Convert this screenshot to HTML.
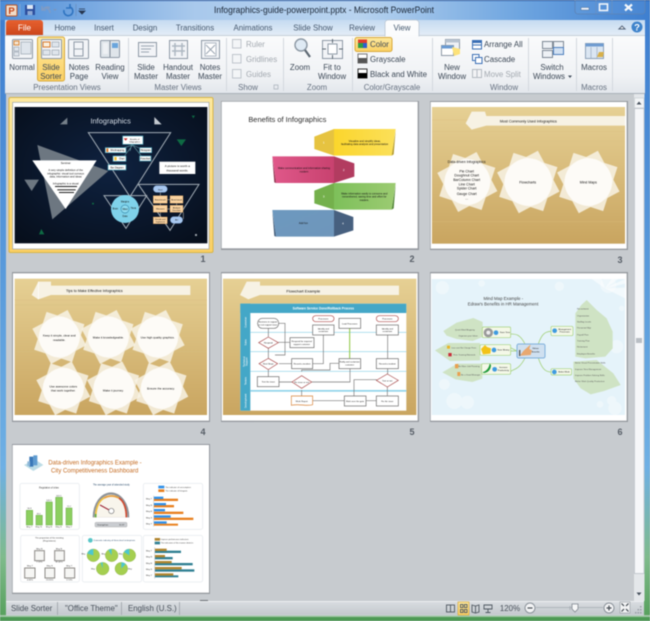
<!DOCTYPE html>
<html><head><meta charset="utf-8"><title>Infographics-guide-powerpoint.pptx - Microsoft PowerPoint</title>
<style>
html,body{margin:0;padding:0;width:650px;height:621px;overflow:hidden;background:#c7cbcf}
svg{display:block;position:absolute;left:0;top:0;font-family:"Liberation Sans",sans-serif;filter:blur(.4px)}
.r{font-size:7.9px;fill:#3c4856;text-anchor:middle}
.l{font-size:7.9px;fill:#3c4856}
.d{font-size:7.9px;fill:#a3a9b0}
.g{font-size:7.9px;fill:#667180;text-anchor:middle}
.t{font-size:7.9px;fill:#45596f;text-anchor:middle}
.n{font-size:9px;font-weight:bold;fill:#565d66;text-anchor:middle}
.k{fill:#111;text-anchor:middle}
.b{fill:#fff;stroke:#666;stroke-width:2}
.ln{stroke:#777;stroke-width:2;fill:none}
.dm{fill:#fff;stroke:#a94f4f;stroke-width:2}
.ic{fill:#f2f4f7;stroke:#8e99a6;stroke-width:1}
.ic2{fill:#dfe5ec;stroke:#9aa5b1;stroke-width:.7}
.lf{fill:#cfe3c4}
.nd{fill:#f4f8e8;stroke:#a5d27e;stroke-width:2}
</style></head><body>
<svg width="650" height="621" viewBox="0 0 650 621" xmlns="http://www.w3.org/2000/svg">
<defs>
<linearGradient id="fr" x1="0" y1="0" x2="0" y2="1"><stop offset="0" stop-color="#3f7fd0"/><stop offset=".75" stop-color="#6fb0e4"/><stop offset=".9" stop-color="#7fbb8c"/><stop offset="1" stop-color="#57a05c"/></linearGradient>
<linearGradient id="tb" x1="0" y1="0" x2="1" y2="0"><stop offset="0" stop-color="#4d8dd8"/><stop offset=".3" stop-color="#a9c9ec"/><stop offset=".55" stop-color="#b8d3ef"/><stop offset=".8" stop-color="#6ea5e0"/><stop offset="1" stop-color="#3e7fd0"/></linearGradient>
<linearGradient id="tabs" x1="0" y1="0" x2="0" y2="1"><stop offset="0" stop-color="#c6dbf1"/><stop offset="1" stop-color="#e6eef7"/></linearGradient>
<linearGradient id="rib" x1="0" y1="0" x2="0" y2="1"><stop offset="0" stop-color="#fafbfc"/><stop offset=".7" stop-color="#f0f2f5"/><stop offset="1" stop-color="#e3e7ec"/></linearGradient>
<linearGradient id="file" x1="0" y1="0" x2="0" y2="1"><stop offset="0" stop-color="#e8622f"/><stop offset="1" stop-color="#c9431a"/></linearGradient>
<linearGradient id="sel" x1="0" y1="0" x2="0" y2="1"><stop offset="0" stop-color="#fde99f"/><stop offset="1" stop-color="#fbd064"/></linearGradient>
<linearGradient id="wood" x1="0" y1="0" x2="0" y2="1"><stop offset="0" stop-color="#e6d094"/><stop offset="1" stop-color="#c9a560"/></linearGradient>
<radialGradient id="dark" cx=".5" cy=".45" r=".7"><stop offset="0" stop-color="#0f2240"/><stop offset="1" stop-color="#070f1c"/></radialGradient>
<linearGradient id="status" x1="0" y1="0" x2="0" y2="1"><stop offset="0" stop-color="#d9dde1"/><stop offset="1" stop-color="#c3c8cd"/></linearGradient>
<linearGradient id="pk" x1="0" y1="0" x2="1" y2="0"><stop offset="0" stop-color="#e0588a"/><stop offset="1" stop-color="#c8426f"/></linearGradient>
<linearGradient id="gr" x1="0" y1="0" x2="1" y2="0"><stop offset="0" stop-color="#7dc05a"/><stop offset="1" stop-color="#9ccb72"/></linearGradient>
<linearGradient id="bl" x1="0" y1="0" x2="1" y2="1"><stop offset="0" stop-color="#6d99bf"/><stop offset="1" stop-color="#6f96bb"/></linearGradient>
<linearGradient id="ye" x1="0" y1="0" x2="1" y2="0"><stop offset="0" stop-color="#fbd62c"/><stop offset="1" stop-color="#fbe05a"/></linearGradient>
<g id="star"><rect x="-68" y="-68" width="136" height="136" fill="#f8f3e6" opacity=".85" transform="rotate(18)"/><rect x="-68" y="-68" width="136" height="136" fill="#f8f3e6" opacity=".85" transform="rotate(62)"/><circle r="70" fill="#fdfbf7"/></g>
</defs>

<!-- frame -->
<rect x="0" y="0" width="650" height="621" fill="url(#fr)"/>
<rect x="0" y="0" width="650" height="20" fill="url(#tb)"/>
<rect x="0" y="0" width="650" height="1" fill="#2b5da8"/>
<rect x="0" y="20" width="650" height="16" fill="url(#tabs)"/>
<rect x="0" y="617" width="650" height="4" fill="#4e9a55"/>
<rect x="0" y="20" width="5" height="597" fill="url(#fr)"/>
<rect x="645" y="20" width="5" height="597" fill="url(#fr)"/>

<!-- QAT -->
<rect x="6" y="5" width="11" height="11" rx="1" fill="#f0dcc8" stroke="#b8562a"/>
<text x="11.5" y="14" font-size="9.5" font-weight="bold" fill="#c4441a" text-anchor="middle">P</text>
<rect x="19.5" y="4" width="1" height="12" fill="#7ea6d4"/>
<rect x="25" y="5" width="10" height="10" fill="#2d4f9e"/><rect x="27" y="5" width="6" height="4" fill="#dfe8f5"/><rect x="27.5" y="11" width="5" height="4" fill="#8ea8d4"/>
<path d="M43 10a4.5 4.5 0 0 1 7 -2M50 13a5 5 0 0 0 -6 -5M42 6v4h4" stroke="#7f9bc4" stroke-width="1.6" fill="none"/>
<path d="M53 9l2 2 2-2z" fill="#7c95bb"/>
<path d="M64 10a4.5 4.5 0 1 0 6 -3M70 4v4h-4" stroke="#2f74c0" stroke-width="1.6" fill="none"/>
<rect x="75.5" y="4" width="1" height="12" fill="#6c93c4"/>
<path d="M79 9h6M79 11l3 3 3-3z" stroke="#26364f" fill="#26364f" stroke-width=".8"/>
<text x="324" y="13" font-size="9.6" fill="#1a2636" text-anchor="middle" textLength="220" lengthAdjust="spacingAndGlyphs">Infographics-guide-powerpoint.pptx  -  Microsoft PowerPoint</text>

<!-- window buttons -->
<path d="M575 0v11a3 3 0 0 0 3 3h64a3 3 0 0 0 3-3v-11" fill="#7eaee2" fill-opacity=".15" stroke="#5d83b4" stroke-width=".8"/>
<path d="M596 0v14M612 0v14" stroke="#6a8fbe" stroke-width=".7"/>
<rect x="581" y="7.5" width="8" height="2.5" fill="#f2f6fb" stroke="#4a6c98" stroke-width=".5"/>
<rect x="599.5" y="4" width="8" height="6.5" fill="none" stroke="#f2f6fb" stroke-width="1.6"/>
<path d="M625 4.5l7 6M632 4.5l-7 6" stroke="#f4f7fb" stroke-width="2.2"/>

<!-- tabs -->
<path d="M6 36v-13a3 3 0 0 1 3-3h31a3 3 0 0 1 3 3v13z" fill="url(#file)"/>
<text x="24.5" y="30.5" font-size="8.2" fill="#fff" text-anchor="middle">File</text>
<text x="65" y="30.5" class="t">Home</text>
<text x="104" y="30.5" class="t">Insert</text>
<text x="145" y="30.5" class="t">Design</text>
<text x="195" y="30.5" class="t">Transitions</text>
<text x="253" y="30.5" class="t">Animations</text>
<text x="313" y="30.5" class="t">Slide Show</text>
<text x="362" y="30.5" class="t">Review</text>
<path d="M619 29l3-3 3 3z" fill="#fff" stroke="#55657a" stroke-width="1"/>
<circle cx="637" cy="27" r="5.5" fill="#3f83cb"/><text x="637" y="30.5" font-size="9.5" font-weight="bold" fill="#fff" text-anchor="middle">?</text>

<!-- ribbon -->
<rect x="5" y="36" width="640" height="57" fill="url(#rib)"/>
<rect x="5" y="35" width="640" height="1" fill="#c4ced9"/>
<path d="M385 36v-13a3 3 0 0 1 3-3h28a3 3 0 0 1 3 3v13z" fill="#fbfcfd" stroke="#b9c5d2" stroke-width=".8"/>
<rect x="385.5" y="35" width="33" height="2" fill="#fafbfc"/>
<text x="402" y="30.5" class="t">View</text>
<rect x="5" y="93" width="640" height="1" fill="#a9b1ba"/>
<g fill="#d3d8de"><rect x="128" y="38" width="1" height="53"/><rect x="226" y="38" width="1" height="53"/><rect x="283" y="38" width="1" height="53"/><rect x="352" y="38" width="1" height="53"/><rect x="432" y="38" width="1" height="53"/><rect x="528" y="38" width="1" height="53"/><rect x="576" y="38" width="1" height="53"/><rect x="612" y="38" width="1" height="53"/></g>

<!-- highlights -->
<rect x="37.5" y="37" width="27" height="44" rx="2" fill="url(#sel)" stroke="#d8a93a"/>
<rect x="355" y="37.5" width="37" height="14" rx="2" fill="url(#sel)" stroke="#d8a93a"/>

<!-- big icons -->
<rect x="12.5" y="39.5" width="20" height="19" rx="1" class="ic"/><rect x="14" y="41" width="5" height="4" fill="#f4e3cf" stroke="#d98a3c"/><rect x="14" y="47" width="5" height="4" class="ic2"/><rect x="14" y="52" width="5" height="4" class="ic2"/><rect x="21" y="42" width="10" height="12" class="ic2"/>
<rect x="41.5" y="39.5" width="20" height="19" rx="1" class="ic"/><rect x="43" y="42" width="7" height="5" fill="#fbf0dd" stroke="#d9792a"/><rect x="52" y="42" width="7" height="5" class="ic2"/><rect x="43" y="50" width="7" height="5" class="ic2"/><rect x="52" y="50" width="7" height="5" class="ic2"/>
<rect x="68.5" y="39.5" width="20" height="19" rx="1" class="ic"/><rect x="74" y="42" width="9" height="14" class="ic" fill="#fff"/><path d="M74 49h9" stroke="#9aa5b1"/>
<rect x="100.5" y="40.5" width="19" height="17" rx="1" fill="#dfe5ea" stroke="#8e99a6"/><path d="M110 41v16" stroke="#7c8795"/><rect x="112" y="43" width="6" height="5" fill="#6aa5dc"/><rect x="103" y="43" width="5" height="11" fill="#eef1f4"/>
<rect x="138.5" y="42.5" width="18" height="14" class="ic"/><path d="M141 46h13M141 49h10M141 52h8" stroke="#9aa5b1"/>
<rect x="169.5" y="40.5" width="18" height="18" class="ic"/><path d="M172 46h13M172 51h13M175 43v13M182 43v13" stroke="#aeb7c2" stroke-width="1.5"/>
<rect x="201.5" y="40.5" width="18" height="18" class="ic"/><rect x="205" y="43" width="11" height="13" fill="#fff" stroke="#aeb7c2"/><path d="M206 45l9 9M215 45l-9 9" stroke="#9aa5b1"/>

<!-- big labels -->
<text x="22" y="70" class="r">Normal</text>
<text x="51" y="70" class="r">Slide</text><text x="51" y="79" class="r">Sorter</text>
<text x="79" y="70" class="r">Notes</text><text x="79" y="79" class="r">Page</text>
<text x="110" y="70" class="r">Reading</text><text x="110" y="79" class="r">View</text>
<text x="146" y="70" class="r">Slide</text><text x="146" y="79" class="r">Master</text>
<text x="178" y="70" class="r">Handout</text><text x="178" y="79" class="r">Master</text>
<text x="210" y="70" class="r">Notes</text><text x="210" y="79" class="r">Master</text>

<!-- show -->
<g fill="#f3f5f7" stroke="#bfc5cc"><rect x="232.5" y="39.5" width="8.5" height="8.5"/><rect x="232.5" y="54.5" width="8.5" height="8.5"/><rect x="232.5" y="69.5" width="8.5" height="8.5"/></g>
<text x="246" y="47" class="d">Ruler</text><text x="246" y="62" class="d">Gridlines</text><text x="246" y="77" class="d">Guides</text>
<path d="M274 85h4v4h-4z" fill="none" stroke="#a8b0b9" stroke-width=".7"/>

<!-- zoom -->
<circle cx="301" cy="45" r="6" fill="#dfeaf4" stroke="#8b97a3" stroke-width="1.4"/><path d="M305 50l5 7" stroke="#5d6873" stroke-width="2.2"/>
<text x="300" y="70" class="r">Zoom</text>
<rect x="322.5" y="40.5" width="20" height="18" class="ic"/><rect x="328" y="44" width="9" height="10" fill="#fff" stroke="#8e99a6"/><path d="M332.5 39v4M332.5 55v4M322 49h4M339 49h4" stroke="#5d6873"/>
<text x="332" y="70" class="r">Fit to</text><text x="332" y="79" class="r">Window</text>

<!-- color -->
<rect x="358" y="39.5" width="9" height="4" fill="#e23c2c"/><rect x="358" y="43" width="5" height="5" fill="#2f9e44"/><rect x="363" y="43" width="4" height="5" fill="#2d5fcf"/>
<rect x="358" y="54" width="9" height="9" fill="#fff" stroke="#777"/><rect x="358" y="58" width="9" height="5" fill="#555"/>
<rect x="358" y="69" width="9" height="9" fill="#fff" stroke="#333"/><rect x="358" y="73" width="9" height="5" fill="#000"/>
<text x="370" y="47" class="l">Color</text><text x="370" y="62" class="l">Grayscale</text><text x="370" y="77" class="l">Black and White</text>

<!-- window group -->
<rect x="445.5" y="39.5" width="14" height="11" fill="#eef1f5" stroke="#8e99a6"/><rect x="445.5" y="39.5" width="14" height="3" fill="#b9c4d1"/>
<rect x="441.5" y="45.5" width="12" height="10" fill="#fff" stroke="#8e99a6"/><rect x="441.5" y="45.5" width="12" height="3" fill="#6b9bd3"/>
<path d="M452 47l8 2v5l-6 2z" fill="#fde27a"/>
<text x="452" y="70" class="r">New</text><text x="452" y="79" class="r">Window</text>
<rect x="472.5" y="40.5" width="9" height="8.5" fill="#fff" stroke="#3a6fb5"/><rect x="472.5" y="40.5" width="9" height="2.5" fill="#3a6fb5"/><path d="M472 45h10" stroke="#3a6fb5"/>
<rect x="472.5" y="54.5" width="6.5" height="6" fill="#fff" stroke="#3a6fb5"/><rect x="475.5" y="57.5" width="6.5" height="6" fill="#fff" stroke="#3a6fb5"/>
<rect x="472.5" y="69.5" width="9" height="8" fill="#f2f3f5" stroke="#b4bac1"/><path d="M477 70v7" stroke="#b4bac1"/>
<text x="484" y="47" class="l">Arrange All</text><text x="484" y="62" class="l">Cascade</text><text x="484" y="77" class="d">Move Split</text>
<text x="504" y="90" class="g">Window</text>

<!-- switch -->
<rect x="542.5" y="41.5" width="10" height="7" fill="#eef1f5" stroke="#7d8894"/><rect x="553.5" y="41.5" width="10" height="7" fill="#eef1f5" stroke="#7d8894"/><rect x="542.5" y="50.5" width="10" height="7" fill="#eef1f5" stroke="#7d8894"/><rect x="553.5" y="47.5" width="10" height="7" fill="#d2e1f2" stroke="#4d7fbd"/>
<text x="552" y="70" class="r">Switch</text><text x="549" y="79" class="r">Windows</text><path d="M568 75.500h4l-2 2.500z" fill="#44505e"/>

<!-- macros -->
<rect x="585.5" y="43.5" width="18" height="15" fill="#dbe6f2" stroke="#8ea2b8"/><rect x="585.5" y="43.5" width="18" height="3" fill="#6f9cd0"/><path d="M591 47v11M597 47v11" stroke="#aebdcf"/>
<path d="M597 57l2-5 5 0-1 5z" fill="#d8b04a"/>
<text x="594" y="70" class="r">Macros</text>

<!-- group labels -->
<text x="67" y="90" class="g">Presentation Views</text>
<text x="178" y="90" class="g">Master Views</text>
<text x="248" y="90" class="g">Show</text>
<text x="317" y="90" class="g">Zoom</text>
<text x="392" y="90" class="g">Color/Grayscale</text>
<text x="594" y="90" class="g">Macros</text>

<!-- sorter bg -->
<rect x="6" y="94" width="628" height="507" fill="#c7cbcf"/>

<!-- scrollbar -->
<rect x="634" y="94" width="10.5" height="507" fill="#e4e7ea"/>
<rect x="634.5" y="98" width="9.5" height="10" fill="#f3f5f7" stroke="#c4c9ce" stroke-width=".6"/>
<path d="M636.5 104.5h5l-2.500-3z" fill="#46505c"/>
<rect x="634.5" y="108.5" width="9.5" height="465" fill="#f6f7f9" stroke="#b5bbc2" stroke-width=".7"/>
<rect x="636" y="338" width="6" height="5" fill="#b9bec4"/>
<path d="M636.5 592.5h5l-2.500 3z" fill="#46505c"/>

<!-- shadows & slide sheets -->
<g fill="#6d7278" opacity=".55">
<rect x="221" y="101" width="198" height="149"/><rect x="430" y="101" width="198" height="149"/>
<rect x="12" y="272" width="198" height="150"/><rect x="221" y="272" width="198" height="150"/><rect x="430" y="272" width="198" height="150"/>
<rect x="12" y="444" width="198" height="150"/>
</g>
<rect x="9" y="97.5" width="204" height="155" rx="1.5" fill="url(#sel)" stroke="#d9b648"/>

<!-- SLIDE 1 -->
<g transform="translate(0,95) scale(.33333)">
<rect x="38" y="22" width="589" height="440" fill="#fff" stroke="#9aa0a6" stroke-width="2"/>
<rect x="44" y="36" width="578" height="409" fill="url(#dark)"/>
<text x="332" y="86" font-size="22" fill="#d6dee7" text-anchor="middle" textLength="121" lengthAdjust="spacingAndGlyphs">Infographics</text>
<polygon points="180,88 202,68 202,88" fill="#76808a"/><polygon points="463,66 463,88 485,88" fill="#c4cad0"/>
<polygon points="530,133 558,133 544,153" fill="#0e6a43"/><polygon points="575,62 585,62 580,70" fill="#0e6a43"/><polygon points="117,418 133,418 124,402" fill="#0e6a43"/>
<circle cx="279" cy="326" r="3" fill="#0e6a43"/><rect x="585" y="417" width="6" height="6" fill="#99a0a8"/>
<polygon points="112,150 325,228 157,373" fill="#6d7781"/><polygon points="73,254 117,254 95,288" fill="#6d7781"/>
<polygon points="97,196 290,196 197,342" fill="#fff"/>
<g fill="none" stroke="#a3adb6" stroke-width="3"><polygon points="265,113 512,113 390,305"/><polygon points="415,268 597,268 510,406"/><polygon points="312,302 440,302 378,400"/></g>
<text x="197" y="207" class="k" font-size="8">Seminar</text>
<text x="197" y="228" class="k" font-size="8">A very simple definition of the</text>
<text x="197" y="238" class="k" font-size="8">infographic: visual tool conveys</text>
<text x="197" y="247" class="k" font-size="8">data, information and ideas</text>
<text x="197" y="268" class="k" font-size="8">Infographic is a visual</text>
<g fill="#222"><rect x="165" y="273" width="66" height="3"/><rect x="172" y="283" width="55" height="3"/><rect x="177" y="291" width="45" height="3"/></g>
<circle cx="375" cy="342" r="42" fill="#7fd2ea"/><circle cx="375" cy="342" r="12" fill="#8fdcf0" stroke="#3c8eb0" stroke-width="2"/>
<text x="375" y="322" class="k" font-size="7">Margins</text><text x="375" y="345" class="k" font-size="7">Mind</text><text x="346" y="344" class="k" font-size="7">Brain</text><text x="400" y="342" class="k" font-size="7">Think</text><text x="375" y="366" class="k" font-size="7">Data</text>
<path d="M398 138l-8 30M398 150L350 165M398 150l-30 40M398 150l32 15M398 150l30 38" stroke="#5d8f9a" stroke-width="2" fill="none"/>
<g fill="#fff" stroke="#49a0b5" stroke-width="2"><rect x="368" y="123" width="61" height="25"/><rect x="316" y="158" width="62" height="15"/><rect x="339" y="183" width="39" height="16"/><rect x="324" y="209" width="54" height="16"/><rect x="419" y="158" width="36" height="15"/><rect x="419" y="183" width="34" height="15"/></g>
<path d="M371 130h12l-6 7z" fill="#c22"/><rect x="319" y="160" width="6" height="11" fill="#d97a2c"/><rect x="343" y="186" width="7" height="10" fill="#f1c232"/>
<text x="404" y="135" class="k" font-size="6">Benefits of</text><text x="404" y="142" class="k" font-size="6">Infographics</text><text x="352" y="168" class="k" font-size="7">Mindmapping</text><text x="365" y="194" class="k" font-size="7">Chart</text><text x="351" y="220" class="k" font-size="7">Bar Diagram</text><text x="437" y="168" class="k" font-size="7">Histogram</text><text x="436" y="193" class="k" font-size="7">Flowchart</text>
<rect x="478" y="200" width="108" height="37" fill="#fff"/>
<text x="532" y="216" class="k" font-size="9">A picture is worth a</text><text x="532" y="229" class="k" font-size="9">thousand words.</text>
<path d="M481 290v12M481 325v8M481 352v14M530 325v8M550 352v20M502 314h8M502 342h8" stroke="#999" stroke-width="2"/>
<g fill="#a8c8f0" stroke="#7da6d8"><rect x="460" y="272" width="42" height="20" rx="10"/><rect x="511" y="365" width="37" height="20" rx="10"/></g>
<g fill="#fbd3a0" stroke="#d89a50"><rect x="460" y="302" width="42" height="23"/><rect x="510" y="302" width="39" height="23"/><rect x="460" y="331" width="42" height="21"/><rect x="510" y="331" width="39" height="21"/><rect x="460" y="366" width="42" height="20"/></g>
<text x="481" y="286" class="k" font-size="6.5">Start</text><text x="481" y="316" class="k" font-size="6.5">Benchmark</text><text x="530" y="316" class="k" font-size="6.5">Benchmark</text><text x="481" y="344" class="k" font-size="6.5">Measure</text><text x="530" y="340" class="k" font-size="6.5">Analyze</text><text x="530" y="348" class="k" font-size="6.5">Decision</text><text x="481" y="375" class="k" font-size="6">Decide and</text><text x="481" y="382" class="k" font-size="6">Implement</text><text x="530" y="377" class="k" font-size="6.5">Act</text>
</g>
<text x="203" y="262" class="n">1</text>

<!-- SLIDE 2 -->
<g transform="translate(215,95) scale(.33333)">
<rect x="20" y="20" width="588" height="440" fill="#fff"/>
<text x="100" y="81" font-size="21.5" fill="#2c2c2c" textLength="234" lengthAdjust="spacingAndGlyphs">Benefits of Infographics</text>
<polygon points="357,102 298,125 298,162 357,182" fill="#e6c340"/><polygon points="357,102 542,102 530,182 357,182" fill="url(#ye)"/><polygon points="542,106 530,182 536,178" fill="#b39a2a"/>
<polygon points="172,184 357,184 357,264 183,264" fill="url(#pk)"/><polygon points="357,184 418,205 418,245 357,264" fill="#b23c60"/><polygon points="172,187 183,264 178,262" fill="#8e2d4b"/>
<polygon points="298,287 357,264 357,344 298,325" fill="#74b04c"/><polygon points="357,264 542,264 530,344 357,344" fill="url(#gr)"/><polygon points="542,268 530,344 536,340" fill="#4f8433"/>
<polygon points="172,345 357,345 357,425 183,425" fill="url(#bl)"/><polygon points="357,345 415,366 415,406 357,425" fill="#47607f"/><polygon points="172,348 183,425 178,423" fill="#3b5674"/>
<g fill="#fff" font-size="9" text-anchor="middle"><text x="326" y="146">1</text><text x="386" y="228">2</text><text x="326" y="308">3</text><text x="384" y="389">4</text></g>
<g font-size="7.8" class="k"><text x="449" y="141">Visualize  and simplify  ideas,</text><text x="449" y="150">facilitating  data  analysis  and presentation</text>
<text x="267" y="222">Make  communication  and information sharing</text><text x="267" y="232">modern</text>
<text x="448" y="298">Make  information  easily  to consume  and</text><text x="448" y="308">remembered,  saving time and effort  for</text><text x="448" y="318">readers.</text>
<text x="265" y="387">Add  fun</text></g>
</g>
<text x="412" y="262" class="n">2</text>

<!-- SLIDE 3 -->
<g transform="translate(425,95) scale(.33333)">
<rect x="17" y="21" width="588" height="440" fill="#fff"/>
<rect x="21" y="36" width="579" height="410" fill="url(#wood)"/>
<path d="M21 75h579M21 110h579M21 140h579M21 380h579" stroke="#d9bf80" stroke-width="2" opacity=".5"/>
<polygon points="122,85 140,50 180,50 184,63 600,63 600,92 184,92 140,104" fill="#f7f2e4"/>
<text x="310" y="82" class="k" font-size="11">Most Commonly  Used  Infographics</text>
<use href="#star" transform="translate(127,261) scale(.98)"/><use href="#star" transform="translate(310,261) scale(1.02)"/><use href="#star" transform="translate(490,261) scale(1.02)"/>
<g class="k" font-size="10.5"><text x="125" y="204">Data-driven  Infographics</text><text x="125" y="232">Pie  Chart</text><text x="125" y="245">Doughnut  Chart</text><text x="125" y="258">BarColumn  Chart</text><text x="125" y="271">Line  Chart</text><text x="125" y="284">Spider  Chart</text><text x="125" y="300">Gauge  Chart</text><text x="125" y="314">...</text><text x="308" y="265">Flowcharts</text><text x="490" y="265">Mind  Maps</text></g>
</g>
<text x="620" y="263" class="n">3</text>

<!-- SLIDE 4 -->
<g transform="translate(0,265) scale(.33333)">
<rect x="39" y="25" width="588" height="442" fill="#fff"/>
<rect x="44" y="41" width="577" height="409" fill="url(#wood)"/>
<path d="M44 105h577M44 120h577M44 260h577" stroke="#d9bf80" stroke-width="2" opacity=".5"/>
<polygon points="95,90 115,50 153,50 153,62 571,62 571,90 153,90 115,103" fill="#f7f2e4"/>
<path d="M115 50v53" stroke="#fff" stroke-width="2"/>
<text x="283" y="81" class="k" font-size="11">Tips to Make  Effective Infographics</text>
<use href="#star" transform="translate(178,216) scale(.88)"/><use href="#star" transform="translate(325,216) scale(.88)"/><use href="#star" transform="translate(473,216) scale(.88)"/><use href="#star" transform="translate(190,370) scale(.88)"/><use href="#star" transform="translate(342,370) scale(.88)"/><use href="#star" transform="translate(484,370) scale(.88)"/>
<g class="k" font-size="9"><text x="178" y="215">Keep  it  simple,  clear and</text><text x="178" y="228">readable.</text><text x="325" y="220">Make  it knowledgeable.</text><text x="473" y="220">Use high  quality  graphics.</text><text x="190" y="367">Use awesome colors</text><text x="190" y="380">that  work together.</text><text x="340" y="379">Make  it  journey.</text><text x="483" y="374">Ensure  the  accuracy.</text></g>
</g>
<text x="203" y="435" class="n">4</text>

<!-- SLIDE 5 -->
<g transform="translate(215,265) scale(.33333)">
<rect x="20" y="25" width="588" height="442" fill="#fff"/>
<rect x="24" y="41" width="580" height="409" fill="url(#wood)"/>
<polygon points="75,90 95,50 135,50 135,62 552,62 552,90 135,90 100,103" fill="#f7f2e4"/>
<text x="265" y="82" class="k" font-size="12">Flowchart  Example</text>
<rect x="76" y="116" width="498" height="321" fill="#fff"/>
<rect x="76" y="116" width="498" height="28" fill="#44a7c7"/><rect x="76" y="116" width="30" height="321" fill="#44a7c7"/>
<text x="325" y="134" font-size="9.5" font-weight="bold" fill="#fff" text-anchor="middle">Software  Service  Done/Rollback  Process</text>
<g fill="#8fd3ea"><rect x="106" y="201" width="468" height="2"/><rect x="106" y="259" width="468" height="2"/><rect x="106" y="318" width="468" height="2"/><rect x="106" y="375" width="468" height="5"/></g>
<g font-size="7.5" fill="#fff" text-anchor="middle"><text transform="translate(94,172) rotate(-90)">Customer</text><text transform="translate(94,232) rotate(-90)">Sales</text><text transform="translate(90,290) rotate(-90)">Technical</text><text transform="translate(98,290) rotate(-90)">Support</text><text transform="translate(94,348) rotate(-90)">Testers</text><text transform="translate(94,408) rotate(-90)">Development</text></g>
<path class="ln" d="M160 190v25M160 250v30M190 175h20v95h-30M190 232h34M192 296h38M294 296h31v-116M160 315v20M192 351h40M260 320v-5h85v-20h26M290 351h115v-40M518 210v70M518 310v18M485 344h-68v63M517 365v27M292 407h95M454 407h30M260 375v18M325 232v-30" />
<path d="M404 190v90" stroke="#8cc63f" stroke-width="3"/>
<g class="b"><rect x="293" y="180" width="64" height="30"/><rect x="484" y="180" width="66" height="30"/><rect x="372" y="160" width="65" height="30"/><rect x="225" y="218" width="72" height="30"/><rect x="230" y="281" width="63" height="30"/><rect x="372" y="281" width="65" height="30"/><rect x="484" y="281" width="66" height="30"/><rect x="127" y="335" width="65" height="30"/><rect x="388" y="393" width="65" height="30"/><rect x="484" y="393" width="66" height="30"/><rect x="128" y="160" width="63" height="30" rx="14"/></g>
<g fill="#fff" stroke="#b05050" stroke-width="2"><rect x="293" y="152" width="64" height="18" rx="9"/><rect x="484" y="152" width="66" height="18" rx="9"/></g>
<g class="dm"><polygon points="160,216 190,233 160,250 131,233"/><polygon points="160,280 188,296 160,314 132,296"/><polygon points="260,332 290,351 260,370 231,351"/><polygon points="517,327 550,346 517,366 484,346"/></g>
<path d="M229 393h64v26c-20 6-40-4-64 2z" fill="#fff" stroke="#d8843a" stroke-width="2"/>
<g class="k" font-size="6.5"><text x="325" y="163">Processes</text><text x="517" y="163">Processes</text><text x="325" y="193">Identify and</text><text x="325" y="201">customize</text><text x="517" y="193">Identify and</text><text x="517" y="201">customize</text><text x="404" y="178">Load Processes</text><text x="159" y="173">Business  in support</text><text x="159" y="182">or not support issue</text><text x="160" y="236">Respond</text><text x="260" y="231">Respond for  required</text><text x="260" y="240">support customer</text><text x="160" y="299">Next Steps</text><text x="261" y="299">Record a incident</text><text x="404" y="293">Notify and customize</text><text x="404" y="301">customer</text><text x="517" y="299">Record a incident</text><text x="160" y="353">Test the  issue</text><text x="260" y="354">Fix issue or not</text><text x="517" y="349">Test or not</text><text x="260" y="411">Work Report</text><text x="420" y="411">Work over  the gate</text><text x="517" y="411">Fix the  issue</text></g>
</g>
<text x="412" y="435" class="n">5</text>

<!-- SLIDE 6 -->
<g transform="translate(425,265) scale(.33333)">
<rect x="17" y="25" width="588" height="442" fill="#fff"/>
<rect x="20" y="42" width="580" height="408" fill="#e5f3fa"/>
<g fill="#fff" opacity=".35"><circle cx="52" cy="68" r="20"/><circle cx="170" cy="55" r="10"/><circle cx="403" cy="64" r="14"/><circle cx="550" cy="60" r="24"/><circle cx="88" cy="408" r="24"/><circle cx="127" cy="412" r="20"/><circle cx="58" cy="358" r="16"/><circle cx="525" cy="418" r="10"/><circle cx="560" cy="407" r="14"/><circle cx="570" cy="430" r="20"/><circle cx="590" cy="130" r="8"/><circle cx="575" cy="245" r="20"/></g>
<path d="M540 70L600 42v14zM540 70l40-28h-20zM540 70l60-2v16zM540 70l60 30v-16zM540 70l-40-28h30z" fill="#fff" opacity=".55"/>
<g font-size="13" fill="#444" text-anchor="middle"><text x="235" y="105">Mind  Map  Example -</text><text x="234" y="121">Edraw's  Benefits  in  HR Management</text></g>
<path class="lf" d="M55 198l40-25 50-14 28 12v45l-30 12-48-6-30-10z"/>
<path class="lf" d="M30 256l40-22 95 0 0 52-90 2z"/>
<path class="lf" d="M52 322l45-26 75 0v45l-30 10-50-8z"/>
<path class="lf" d="M485 105l30 30 30 25 18 40 0 50-22 25-60 5 -30-5 0-130 18-25z"/>
<path class="lf" d="M445 290l70-5 50 40 22 35-50 18-40 10-30-18-22-30z"/>
<path d="M276 258l-20-10M300 237c-15-30-28-30-43-30M300 279c-15 30-28 32-43 40M340 237c10-30 20-37 38-38M340 279c10 30 20 42 38 42" stroke="#a5d27e" stroke-width="2.5" fill="none"/>
<path d="M275 258h-18" stroke="#a5d27e" stroke-width="2.5"/>
<g class="nd"><rect x="172" y="186" width="85" height="32" rx="4"/><rect x="165" y="239" width="92" height="32" rx="4"/><rect x="170" y="296" width="87" height="32" rx="4"/><rect x="378" y="184" width="66" height="28" rx="4"/><rect x="378" y="311" width="62" height="19" rx="4"/></g>
<rect x="276" y="237" width="84" height="42" rx="5" fill="#cfe0f0" stroke="#7fb0dc" stroke-width="3"/>
<path d="M285 272l10-14 22-20 -4 14 8 4-4 14-26 2z" fill="#e8a870"/><rect x="282" y="255" width="4" height="18" fill="#555"/>
<circle cx="190" cy="203" r="14" fill="#999"/><circle cx="190" cy="203" r="6" fill="#eee"/>
<path d="M168 252l12-12 6 6 12 4-2 16-22 2z" fill="#f2c318"/>
<path d="M172 322c14-4 20-14 22-26l4 4c0 14-10 24-22 24z" fill="#1f9a3a"/>
<g fill="#3f9be0"><circle cx="213" cy="203" r="7"/><circle cx="207" cy="255" r="7"/><circle cx="209" cy="313" r="7"/><circle cx="389" cy="197" r="7"/><circle cx="388" cy="321" r="7"/></g>
<g class="k" font-size="6.5"><text x="240" y="204">Save Time</text><text x="235" y="257">Save Money</text><text x="235" y="309">Increase</text><text x="235" y="318">Productivity</text><text x="419" y="195">Management</text><text x="419" y="203">Processes</text><text x="417" y="323">Better Work</text><text x="332" y="252">Edraw</text><text x="332" y="262">Benefits</text></g>
<g font-size="6.5" fill="#555"><text x="90" y="196">Quick Mind Mapping</text><text x="100" y="215">Organize your Ideas</text><text x="79" y="250">Low cost  No Charge Fees</text><text x="85" y="272">Free Training Materials</text><text x="100" y="306">Be More Job Planning</text><text x="108" y="331">Be a Good Manager</text><text x="456" y="133">Recruitment</text><text x="456" y="154">Organization</text><text x="456" y="172">Staffing Levels</text><text x="456" y="190">Personnel Mgt</text><text x="456" y="211">Payroll Plan</text><text x="456" y="229">Training Plan</text><text x="456" y="247">Retirement</text><text x="456" y="268">Employee Benefits</text><text x="450" y="295">Better Visual Presentation Skills</text><text x="450" y="315">Improve Time Management</text><text x="450" y="333">Improve Problem Solving Skills</text><text x="450" y="351">Better Work Quality Production</text></g>
<g fill="#e9a050"><rect x="90" y="297" width="10" height="13"/><rect x="97" y="321" width="9" height="12"/></g><rect x="66" y="242" width="9" height="9" fill="#e8b428"/><rect x="70" y="264" width="10" height="10" fill="#c82e3a"/>
</g>
<text x="620" y="435" class="n">6</text>

<!-- SLIDE 7 -->
<g transform="translate(0,440) scale(.33333)">
<rect x="38" y="15" width="589" height="443" fill="#fff"/>
<polygon points="72,75 105,58 130,75 100,93" fill="#bcdce6"/><rect x="88" y="50" width="12" height="30" fill="#3a78b8"/><rect x="100" y="46" width="12" height="30" fill="#5e9bd0"/><rect x="82" y="64" width="8" height="14" fill="#8fb8d8"/>
<g font-size="19" fill="#c46a20" text-anchor="middle"><text x="285" y="74" textLength="280" lengthAdjust="spacingAndGlyphs">Data-driven Infographics Example -</text><text x="284" y="97" textLength="262" lengthAdjust="spacingAndGlyphs">City Competitiveness Dashboard</text></g>
<g fill="#fff" stroke="#eceff2" stroke-width="3"><rect x="60" y="130" width="178" height="138" rx="6"/><rect x="430" y="130" width="178" height="138" rx="6"/><rect x="62" y="286" width="176" height="140" rx="6"/><rect x="247" y="286" width="178" height="140" rx="6"/><rect x="430" y="286" width="178" height="140" rx="6"/></g>
<text x="147" y="146" font-size="7" fill="#333" text-anchor="middle">Regulation of cities</text>
<g fill="#8ccf60" stroke="#5fa63a" stroke-width="1.5"><rect x="79" y="211" width="19" height="44"/><rect x="108" y="226" width="19" height="29"/><rect x="138" y="186" width="19" height="69"/><rect x="167" y="172" width="20" height="83"/><rect x="198" y="204" width="18" height="51"/></g>
<g font-size="6.5" fill="#444" text-anchor="middle"><text x="88" y="207">56.8</text><text x="116" y="223">39.2</text><text x="147" y="183">109.5</text><text x="176" y="169">142.9</text><text x="207" y="201">72.7</text><text x="88" y="263">Mey T</text><text x="116" y="263">Mey N</text><text x="147" y="263">Mey B</text><text x="176" y="263">Mey S</text><text x="207" y="263">Mey Y</text></g>
<text x="334" y="136" font-size="7" fill="#246" text-anchor="middle">The average year of attended study</text>
<path d="M278 232a55 75 0 1 1 110 0z" fill="#8d9399"/>
<path d="M284 232a49 68 0 1 1 98 0z" fill="#f8f5ec"/>
<path d="M287 232c0-30 10-50 25-58" stroke="#f0c040" stroke-width="5" fill="none"/><path d="M312 174c15-8 30-8 45 0" stroke="#e8a040" stroke-width="5" fill="none"/><path d="M357 174c15 10 22 30 22 58" stroke="#d04a30" stroke-width="5" fill="none"/><path d="M287 232v-10" stroke="#5fae40" stroke-width="5"/>
<path d="M300 195l33 18" stroke="#9a2030" stroke-width="3"/><circle cx="334" cy="213" r="8" fill="#fff" stroke="#777" stroke-width="2"/>
<rect x="285" y="247" width="96" height="14" rx="3" fill="#c9ccd0" stroke="#999"/><text x="308" y="257" font-size="6.5" fill="#333" text-anchor="middle">Guangzhou</text><text x="365" y="257" font-size="6.5" fill="#333" text-anchor="middle">10.37</text>
<!-- bars 1 -->
<rect x="475" y="137" width="18" height="8" fill="#2f8fe8"/><rect x="475" y="148" width="18" height="8" fill="#e8801f"/>
<g font-size="6" fill="#444"><text x="496" y="144">The indicator of consumption</text><text x="496" y="155">The indicator of Integrate</text></g>
<path d="M461 167v93" stroke="#999"/>
<g fill="#e8801f"><rect x="462" y="176" width="72" height="7"/><rect x="462" y="195" width="60" height="7"/><rect x="462" y="215" width="88" height="7"/><rect x="462" y="233" width="118" height="7"/><rect x="462" y="251" width="72" height="6"/></g>
<g fill="#2f8fe8"><rect x="462" y="170" width="28" height="7"/><rect x="462" y="189" width="36" height="7"/><rect x="462" y="207" width="33" height="7"/><rect x="462" y="226" width="50" height="7"/><rect x="462" y="244" width="38" height="7"/></g>
<g font-size="6.5" fill="#333"><text x="438" y="179">Mey T</text><text x="438" y="198">Mey N</text><text x="438" y="216">Mey B</text><text x="438" y="235">Mey S</text><text x="438" y="253">Mey Y</text></g>
<!-- boxes -->
<g font-size="6.5" fill="#333" text-anchor="middle"><text x="148" y="296">The proportion of the meeting</text><text x="148" y="304">(Regulations)</text><text x="118" y="329">Mey N</text><text x="177" y="329">Mey B</text><text x="90" y="379">Mey T</text><text x="149" y="379">Mey S</text><text x="208" y="379">Mey Y</text><text x="118" y="368">7.59%</text><text x="177" y="368">39.42%</text><text x="90" y="421">4.82%</text><text x="149" y="421">23.35%</text><text x="208" y="421">17.8%</text></g>
<g fill="#f6f6f4" stroke="#8d8a86" stroke-width="3"><rect x="104" y="332" width="29" height="30"/><rect x="164" y="332" width="29" height="30"/><rect x="74" y="384" width="31" height="30"/><rect x="135" y="384" width="29" height="30"/><rect x="194" y="384" width="30" height="30"/></g>
<!-- pies -->
<circle cx="271" cy="301" r="7" fill="#58c6c8"/><text x="281" y="303" font-size="6.5" fill="#246">Domestic  industry of three-level enterprises</text>
<g fill="#a5cf50" stroke="#7fa83a"><circle cx="280" cy="346" r="19"/><circle cx="335" cy="346" r="19"/><circle cx="388" cy="346" r="19"/><circle cx="308" cy="386" r="19"/><circle cx="364" cy="386" r="19"/></g>
<g fill="#4cc7cf"><path d="M280 346v-19a19 19 0 0 0-18 14z"/><path d="M335 346v-19a19 19 0 0 0-10 3z"/><path d="M388 346v-19a19 19 0 0 0-16 9z"/><path d="M308 386v-19a19 19 0 0 0-6 1z"/><path d="M364 386v-19a19 19 0 0 1 13 5z"/></g>
<g font-size="6" fill="#333" text-anchor="middle"><text x="250" y="344">Mey</text><text x="310" y="344">Mey</text><text x="362" y="344">Mey</text><text x="279" y="388">Mey</text><text x="390" y="388">Mey</text></g>
<!-- bars 2 -->
<rect x="464" y="294" width="16" height="8" fill="#b0842e"/><rect x="464" y="305" width="16" height="8" fill="#2f7f92"/>
<g font-size="6" fill="#444"><text x="482" y="300">Improve performance indicators</text><text x="482" y="311">The indicators of the manner  districts</text></g>
<path d="M464 322v94" stroke="#999"/>
<g fill="#2f7f92"><rect x="465" y="332" width="78" height="7"/><rect x="465" y="351" width="53" height="7"/><rect x="465" y="369" width="113" height="7"/><rect x="465" y="388" width="118" height="7"/><rect x="465" y="406" width="70" height="6"/></g>
<g fill="#b0842e"><rect x="465" y="326" width="35" height="7"/><rect x="465" y="345" width="30" height="7"/><rect x="465" y="363" width="50" height="7"/><rect x="465" y="381" width="80" height="7"/><rect x="465" y="400" width="55" height="7"/></g>
<g font-size="6.5" fill="#333"><text x="438" y="334">Mey T</text><text x="438" y="352">Mey N</text><text x="438" y="372">Mey B</text><text x="438" y="390">Mey S</text><text x="438" y="408">Mey Y</text></g>
</g>
<rect x="200" y="600" width="8" height="1" fill="#6a6f75"/>

<!-- status bar -->
<rect x="6" y="601" width="638" height="14.5" fill="url(#status)"/>
<rect x="6" y="601" width="638" height="1" fill="#eceef0"/>
<rect x="0" y="615" width="650" height="2" fill="#e6e9ec" opacity=".5"/>
<g fill="#a6abb1"><rect x="57" y="602" width="1" height="13"/><rect x="121" y="602" width="1" height="13"/><rect x="179" y="602" width="1" height="13"/></g>
<g font-size="7.9" fill="#48505a"><text x="11" y="611">Slide Sorter</text><text x="65" y="611">"Office Theme"</text><text x="128" y="611">English (U.S.)</text></g>
<rect x="458" y="602" width="11" height="13" fill="url(#sel)" stroke="#d8a93a" stroke-width=".7"/>
<g fill="none" stroke="#4f5861" stroke-width=".9"><rect x="446.5" y="605" width="8" height="7"/><path d="M450.5 605v7"/><rect x="460.5" y="604.5" width="2.5" height="3"/><rect x="464.5" y="604.5" width="2.5" height="3"/><rect x="460.5" y="609.5" width="2.5" height="3"/><rect x="464.5" y="609.5" width="2.5" height="3"/><path d="M472 605l3.5 1 3.5-1v7l-3.5 1-3.5-1zM475.5 606v7"/><path d="M484 605h8v4h-8zM488 609v3M485.5 612.5h5"/></g>
<text x="510" y="611" font-size="7.9" fill="#48505a" text-anchor="middle">120%</text>
<circle cx="530" cy="608" r="5" fill="#f4f5f6" stroke="#8b929a"/><path d="M527.5 608h5" stroke="#454c54" stroke-width="1.2"/>
<path d="M536 607.5h67M570 606v4" stroke="#a4aab1" stroke-width=".8"/>
<path d="M572 604h6v5l-3 3-3-3z" fill="#f6f7f8" stroke="#7f868e" stroke-width=".8"/>
<circle cx="609" cy="608" r="5" fill="#f4f5f6" stroke="#8b929a"/><path d="M606.5 608h5M609 605.5v5" stroke="#454c54" stroke-width="1.2"/>
<rect x="620" y="602" width="10" height="11" fill="#f3f4f5" stroke="#9aa0a6" stroke-width=".7"/><path d="M621.5 603.5l2.5 2.5M628.5 603.5l-2.5 2.5M621.5 611.5l2.5-2.5M628.5 611.5l-2.5-2.5" stroke="#3f464e" stroke-width="1.2"/>
<g fill="#9aa0a6"><rect x="640" y="606" width="1.5" height="1.5"/><rect x="637.5" y="609" width="1.5" height="1.5"/><rect x="640" y="609" width="1.5" height="1.5"/><rect x="635" y="612" width="1.5" height="1.5"/><rect x="637.5" y="612" width="1.5" height="1.5"/><rect x="640" y="612" width="1.5" height="1.5"/></g>
</svg>
</body></html>
